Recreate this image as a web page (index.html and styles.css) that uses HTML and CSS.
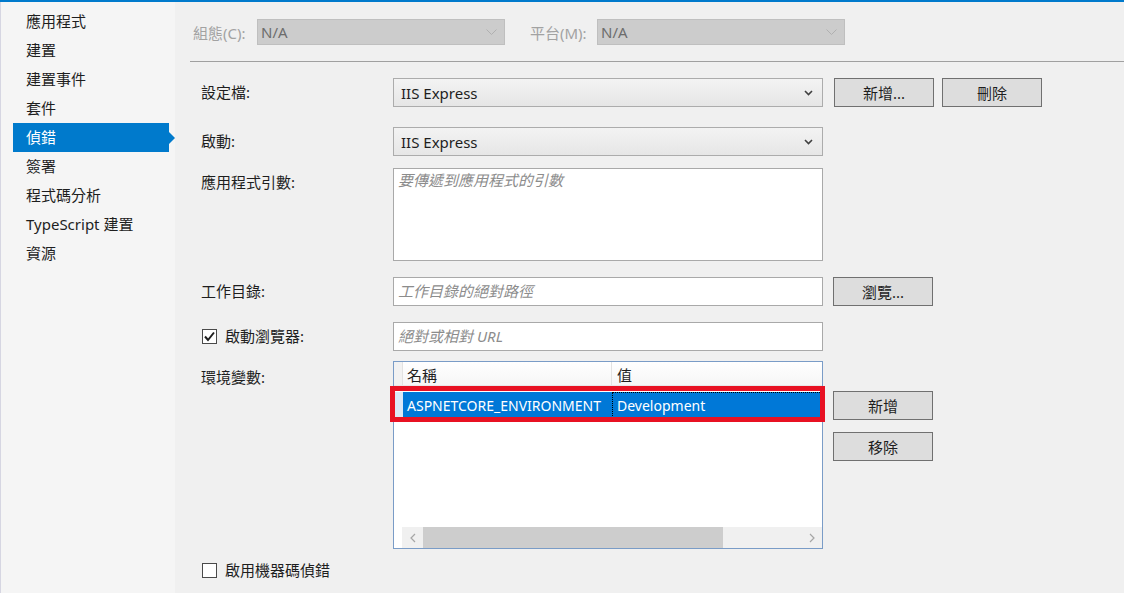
FILE: index.html
```html
<!DOCTYPE html>
<html lang="zh-Hant">
<head>
    <meta charset="UTF-8">
    <meta name="viewport" content="width=device-width, initial-scale=1.0">
    <title>偵錯</title>
    <link rel="stylesheet" href="styles.css">
</head>
<body>

    <div class="topbar"></div>

    <div class="window">
        <nav class="sidebar">
            <ul class="nav-list">
                <li class="nav-item">應用程式</li>
                <li class="nav-item">建置</li>
                <li class="nav-item">建置事件</li>
                <li class="nav-item">套件</li>
                <li class="nav-item active">偵錯</li>
                <li class="nav-item">簽署</li>
                <li class="nav-item">程式碼分析</li>
                <li class="nav-item">TypeScript 建置</li>
                <li class="nav-item">資源</li>
            </ul>
        </nav>

        <main class="content">
            <div class="config-bar">
                <span class="config-label">組態(C):</span>
                <div class="dropdown disabled">
                    <span>N/A</span>
                    <svg class="chevron" width="11" height="7" viewBox="0 0 11 7"><polyline points="0.5,0.5 5.5,5.5 10.5,0.5" fill="none" stroke="#b0b0b0" stroke-width="1"/></svg>
                </div>
                <span class="config-label platform">平台(M):</span>
                <div class="dropdown disabled">
                    <span>N/A</span>
                    <svg class="chevron" width="11" height="7" viewBox="0 0 11 7"><polyline points="0.5,0.5 5.5,5.5 10.5,0.5" fill="none" stroke="#b0b0b0" stroke-width="1"/></svg>
                </div>
            </div>

            <div class="divider"></div>

            <div class="form">
                <div class="row">
                    <label class="field-label">設定檔:</label>
                    <div class="dropdown">
                        <span>IIS Express</span>
                        <svg class="chevron" width="9" height="6" viewBox="0 0 9 6"><polyline points="1,1 4.5,4.5 8,1" fill="none" stroke="#404040" stroke-width="1.6"/></svg>
                    </div>
                    <button class="btn first">新增...</button>
                    <button class="btn second">刪除</button>
                </div>

                <div class="row launch">
                    <label class="field-label">啟動:</label>
                    <div class="dropdown">
                        <span>IIS Express</span>
                        <svg class="chevron" width="9" height="6" viewBox="0 0 9 6"><polyline points="1,1 4.5,4.5 8,1" fill="none" stroke="#404040" stroke-width="1.6"/></svg>
                    </div>
                </div>

                <div class="row args">
                    <label class="field-label">應用程式引數:</label>
                    <div class="textbox multiline"><span class="placeholder">要傳遞到應用程式的引數</span></div>
                </div>

                <div class="row workdir">
                    <label class="field-label">工作目錄:</label>
                    <div class="textbox"><span class="placeholder">工作目錄的絕對路徑</span></div>
                    <button class="btn">瀏覽...</button>
                </div>

                <div class="row browser">
                    <label class="field-label check-label">
                        <span class="checkbox checked">
                            <svg width="13" height="13" viewBox="0 0 13 13"><polyline points="2,6.5 5,10 11,2.5" fill="none" stroke="#1e1e1e" stroke-width="2"/></svg>
                        </span>
                        啟動瀏覽器:
                    </label>
                    <div class="textbox"><span class="placeholder">絕對或相對 URL</span></div>
                </div>

                <div class="row env">
                    <label class="field-label env-label">環境變數:</label>
                    <div class="grid">
                        <div class="grid-head">
                            <div class="row-header"></div>
                            <div class="head-cell name-col">名稱</div>
                            <div class="head-cell value-col">值</div>
                        </div>
                        <div class="grid-row selected">
                            <div class="row-header"></div>
                            <div class="cell name-col">ASPNETCORE_ENVIRONMENT</div>
                            <div class="cell value-col focused">Development</div>
                        </div>
                        <div class="hscroll">
                            <span class="scroll-arrow">
                                <svg width="6" height="10" viewBox="0 0 6 10"><polyline points="5,1 1,5 5,9" fill="none" stroke="#a6a6a6" stroke-width="1.2"/></svg>
                            </span>
                            <span class="scroll-thumb"></span>
                            <span class="scroll-track"></span>
                            <span class="scroll-arrow">
                                <svg width="6" height="10" viewBox="0 0 6 10"><polyline points="1,1 5,5 1,9" fill="none" stroke="#a6a6a6" stroke-width="1.2"/></svg>
                            </span>
                        </div>
                        <!-- annotation round the selected row -->
                        <div class="highlight"></div>
                    </div>
                    <div class="btn-stack">
                        <button class="btn">新增</button>
                        <button class="btn">移除</button>
                    </div>
                </div>

                <div class="row native">
                    <label class="field-label check-label wide">
                        <span class="checkbox"></span>
                        啟用機器碼偵錯
                    </label>
                </div>
            </div>
        </main>
    </div>

</body>
</html>
```

FILE: styles.css
```css
* {
    margin: 0;
    padding: 0;
    box-sizing: border-box;
}

body {
    font-family: 'Segoe UI', 'Noto Sans', 'Noto Sans CJK TC', sans-serif;
    font-size: 15px;
    color: #1e1e1e;
    background-color: #f0f0f0;
    height: 593px;
    overflow: hidden;
}

.topbar {
    height: 2px;
    background-color: #007acc;
}

.window {
    display: flex;
    height: 591px;
}

/* Sidebar */
.sidebar {
    width: 175px;
    flex-shrink: 0;
    background-color: #f5f5f5;
    border-left: 1px solid #d6d6e2;
    padding-top: 5px;
}

.nav-list {
    list-style: none;
}

.nav-item {
    height: 29px;
    line-height: 28px;
    padding-left: 25px;
    white-space: nowrap;
}

.nav-item.active {
    position: relative;
    margin-left: 12px;
    padding-left: 13px;
    width: 156px;
    background-color: #007acc;
    color: #ffffff;
}

.nav-item.active::after {
    content: '';
    position: absolute;
    left: 100%;
    top: 9px;
    border-top: 6px solid transparent;
    border-bottom: 6px solid transparent;
    border-left: 6px solid #007acc;
}

/* Main area */
.content {
    flex: 1;
}

.config-bar {
    display: flex;
    align-items: center;
    padding: 17px 0 16px 18px;
}

.config-label {
    width: 64px;
    color: #a2a2a2;
    white-space: nowrap;
}

.config-label.platform {
    width: 67px;
    margin-left: 25px;
}

.dropdown {
    display: flex;
    align-items: center;
    justify-content: space-between;
    width: 430px;
    height: 29px;
    padding: 0 9px 0 7px;
    border: 1px solid #acacac;
    background: linear-gradient(#f3f3f3, #e6e6e6);
}

.dropdown.disabled {
    width: 248px;
    height: 26px;
    padding: 0 7px 0 3px;
    border-color: #bfbfbf;
    background: #cccccc;
    color: #6d6d6d;
}

.divider {
    height: 1px;
    margin-left: 15px;
    background-color: #a0a0a0;
}

.form {
    padding: 16px 0 0 26px;
}

.row {
    display: flex;
    align-items: flex-start;
}

.row.launch {
    margin-top: 20px;
}

.row.args {
    margin-top: 12px;
}

.row.workdir,
.row.browser {
    margin-top: 16px;
}

.row.env {
    margin-top: 10px;
}

.row.native {
    margin-top: 7px;
}

.field-label {
    width: 192px;
    flex-shrink: 0;
    line-height: 29px;
    white-space: nowrap;
}

.env-label {
    padding-top: 2px;
}

.check-label {
    display: flex;
    align-items: center;
    height: 29px;
}

.check-label.wide {
    width: 300px;
}

.checkbox {
    display: flex;
    align-items: center;
    justify-content: center;
    width: 15px;
    height: 15px;
    margin: 0 8px 0 1px;
    border: 1px solid #4a4a4a;
    background-color: #ffffff;
}

.textbox {
    width: 430px;
    height: 29px;
    padding-left: 4px;
    line-height: 27px;
    border: 1px solid #a9a9a9;
    background-color: #ffffff;
}

.textbox.multiline {
    height: 93px;
    line-height: 22px;
}

.placeholder {
    font-style: italic;
    color: #8c8c8c;
}

.btn {
    width: 100px;
    height: 29px;
    margin-left: 10px;
    font-family: inherit;
    font-size: 15px;
    color: #1e1e1e;
    background-color: #dddddd;
    border: 1px solid #707070;
}

.btn.first {
    margin-left: 11px;
}

.btn.second {
    margin-left: 8px;
}

.btn-stack {
    display: flex;
    flex-direction: column;
    gap: 12px;
    padding-top: 30px;
}

/* Environment variable grid */
.grid {
    position: relative;
    display: flex;
    flex-direction: column;
    width: 430px;
    height: 188px;
    border: 1px solid #7a9cc7;
    background-color: #ffffff;
}

.grid-head {
    display: flex;
    height: 24px;
    background: linear-gradient(#ffffff, #f6f6f6);
    border-bottom: 1px solid #e8e8e8;
}

.row-header {
    width: 9px;
    flex-shrink: 0;
    background-color: #f2f2f2;
    border-right: 1px solid #e2e2e2;
}

.head-cell {
    line-height: 26px;
    white-space: nowrap;
}

.name-col {
    width: 209px;
    padding-left: 4px;
    border-right: 1px solid #e2e2e2;
}

.value-col {
    flex: 1;
    padding-left: 5px;
}

.grid-row {
    display: flex;
    height: 28px;
    margin-top: 6px;
}

.grid-row.selected {
    background-color: #0078d7;
    color: #ffffff;
}

.grid-row.selected .row-header {
    background-color: #dbe8f6;
    border-right: none;
}

.cell {
    font-size: 14px;
    line-height: 28px;
    white-space: nowrap;
    overflow: hidden;
}

.grid-row .name-col {
    border-right: none;
}

.cell.focused {
    outline: 1px dotted #000000;
    outline-offset: -1px;
}

.hscroll {
    display: flex;
    height: 21px;
    margin-top: auto;
    margin-left: 8px;
    background-color: #f0f0f0;
}

.scroll-arrow {
    display: flex;
    align-items: center;
    justify-content: center;
    width: 21px;
}

.scroll-thumb {
    width: 300px;
    background-color: #cdcdcd;
}

.scroll-track {
    flex: 1;
}

.highlight {
    position: absolute;
    left: -4px;
    right: -3px;
    top: 24px;
    height: 36px;
    border: 5px solid #e81123;
}
```
